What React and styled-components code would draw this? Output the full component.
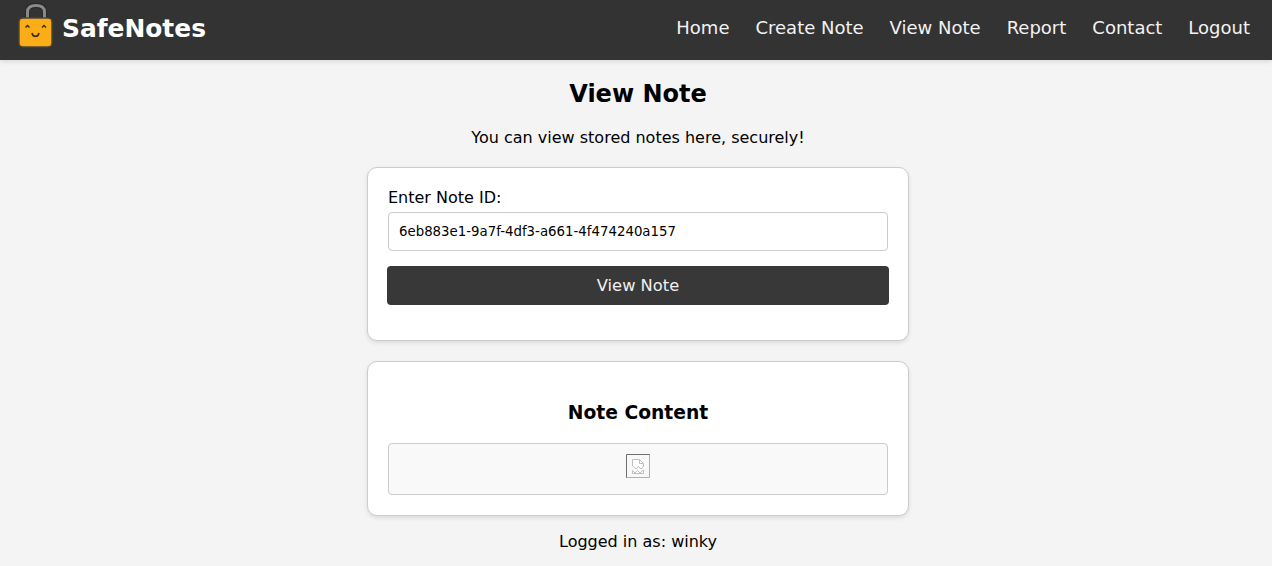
import React from "react";
import styled, { createGlobalStyle } from "styled-components";

const GlobalStyle = createGlobalStyle`
  html, body {
    margin: 0;
    padding: 0;
    background: #f4f4f4;
    color: #000;
    font-family: "DejaVu Sans", sans-serif;
    overflow: hidden;
  }
`;

const Navbar = styled.nav`
  box-sizing: border-box;
  display: flex;
  align-items: center;
  justify-content: space-between;
  height: 60px;
  padding: 0 22px 4px 16px;
  background: #333;
  box-shadow: 0 2px 4px rgba(0, 0, 0, 0.1);
`;

const Brand = styled.a`
  display: flex;
  align-items: center;
  gap: 8px;
  color: #fff;
  font-size: 24.9px;
  font-weight: 700;
`;

const NavLinks = styled.div`
  display: flex;
  gap: 26px;
  padding-bottom: 1px;
`;

const NavLink = styled.a`
  color: #f2f2f2;
  font-size: 18px;
`;

const Main = styled.main`
  display: flex;
  flex-direction: column;
  align-items: center;
  padding: 20px 0 0 4px;
`;

const Title = styled.h1`
  margin: 0 0 20px;
  font-size: 24px;
  line-height: 28px;
  font-weight: 700;
`;

const Intro = styled.p`
  margin: 0 0 20px;
  font-size: 16px;
  line-height: 19px;
`;

const Card = styled.section`
  box-sizing: border-box;
  width: 542px;
  height: ${(p) => p.$height}px;
  margin-bottom: ${(p) => p.$gap}px;
  padding: ${(p) => p.$pad};
  background: #fff;
  border: 1px solid #ccc;
  border-radius: 10px;
  box-shadow: 0 2px 4px rgba(0, 0, 0, 0.1);
`;

const Label = styled.label`
  display: block;
  margin-bottom: 5px;
  font-size: 16px;
  line-height: 19px;
`;

const Input = styled.input`
  display: block;
  box-sizing: border-box;
  width: 500px;
  height: 39px;
  padding: 0 10px;
  background: #fff;
  border: 1px solid #ccc;
  border-radius: 4px;
  color: #000;
  font-family: "DejaVu Sans", sans-serif;
  font-size: 13.33px;
  outline: none;
`;

const Button = styled.button`
  display: block;
  box-sizing: border-box;
  width: 502px;
  height: 39px;
  margin: 15px 0 0 -1px;
  background: #383838;
  border: none;
  border-radius: 4px;
  color: #f0f0f0;
  font-family: "DejaVu Sans", sans-serif;
  font-size: 16.3px;
`;

const Heading = styled.h3`
  margin: 0 0 19px;
  text-align: center;
  font-size: 18.72px;
  line-height: 22px;
  font-weight: 700;
`;

const ContentBox = styled.div`
  box-sizing: border-box;
  display: flex;
  justify-content: center;
  width: 500px;
  height: 52px;
  padding-top: 10px;
  background: #f9f9f9;
  border: 1px solid #ccc;
  border-radius: 4px;
`;

const Footer = styled.p`
  margin: 0;
  font-size: 16px;
  line-height: 19px;
`;

function LockLogo() {
  return (
    <svg width="38" height="50" viewBox="0 0 38 50">
      <path d="M11.5 17V9C11.5 4.5 15 2.5 20 2.5S28.5 4.5 28.5 9V17" fill="none" stroke="#262626" strokeWidth="5" />
      <path d="M11.5 17V9C11.5 4.5 15 2.5 20 2.5S28.5 4.5 28.5 9V17" fill="none" stroke="#8a8a8a" strokeWidth="3" />
      <rect x="3" y="15" width="33" height="29" rx="4" fill="#fbad18" stroke="#4a4438" strokeWidth="1.4" />
      <path d="M9.5 24.5l2-2 2 2M26 24.5l2-2 2 2" fill="none" stroke="#33291a" strokeWidth="1.3" />
      <path d="M16 30c.8 4.4 6.2 4.4 7 0" fill="none" stroke="#33291a" strokeWidth="1.5" />
    </svg>
  );
}

function BrokenImage() {
  return (
    <svg width="24" height="24" viewBox="0 0 24 24">
      <path d="M.5 24V.5H24" fill="none" stroke="#6f6f6f" />
      <path d="M.5 23.5H23.5V.5" fill="none" stroke="#b0b0b0" />
      <path d="M6.5 12V5.5H13.5L17.5 9.5V12.5L15 15l-2.5-2.5L10 15 7.5 12.5Z" fill="#fff" stroke="#c0c0c0" />
      <path d="M13.5 5.5V9.5H17.5" fill="none" stroke="#c0c0c0" />
      <path d="M6.5 16.5L9 19l2.5-2.5L14 19l3.5-3V19.5H6.5Z" fill="#fff" stroke="#c0c0c0" />
    </svg>
  );
}

export default function App() {
  const links = ["Home", "Create Note", "View Note", "Report", "Contact", "Logout"];
  return (
    <>
      <GlobalStyle />
      <Navbar>
        <Brand>
          <LockLogo />
          SafeNotes
        </Brand>
        <NavLinks>
          {links.map((link) => (
            <NavLink key={link}>{link}</NavLink>
          ))}
        </NavLinks>
      </Navbar>
      <Main>
        <Title>View Note</Title>
        <Intro>You can view stored notes here, securely!</Intro>
        <Card $height={174} $gap={20} $pad="20px">
          <Label>Enter Note ID:</Label>
          <Input readOnly value="6eb883e1-9a7f-4df3-a661-4f474240a157" />
          <Button>View Note</Button>
        </Card>
        <Card $height={155} $gap={16} $pad="40px 20px 20px">
          <Heading>Note Content</Heading>
          <ContentBox>
            <BrokenImage />
          </ContentBox>
        </Card>
        <Footer>Logged in as: winky</Footer>
      </Main>
    </>
  );
}
